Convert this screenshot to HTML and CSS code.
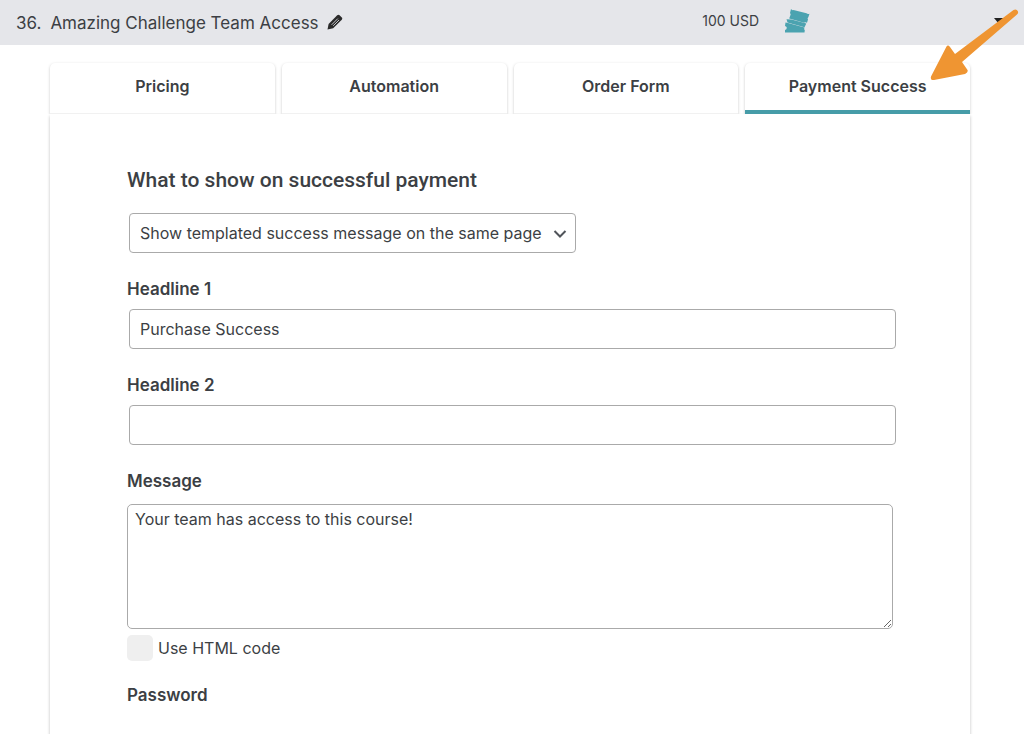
FILE: index.html
```html
<!DOCTYPE html>
<html lang="en">
<head>
    <meta charset="UTF-8">
    <meta name="viewport" content="width=device-width, initial-scale=1.0">
    <title>Amazing Challenge Team Access</title>
    <link rel="stylesheet" href="styles.css">
</head>
<body>
    <header class="plan-header">
        <h1 class="plan-title"><span>36.</span><span>Amazing Challenge Team Access</span></h1>
        <button type="button" class="icon-btn" aria-label="Edit name">
            <svg width="16" height="16" viewBox="0 0 16 16">
                <path d="M0.5 15.5 L1.6 10 L10.2 1.3 Q11.4 0.2 12.6 1.3 L14.8 3.5 Q15.8 4.6 14.8 5.8 L6.2 14.3 Z" fill="#2b2b2b"/>
                <path d="M4.6 10.8 L10.8 4.600 M6.2 11.8 L12 6" fill="none" stroke="#d4d5d9" stroke-width="0.9"/>
            </svg>
        </button>
        <span class="plan-price">100 USD</span>
        <svg class="ticket-icon" width="26" height="24" viewBox="0 0 26 24">
            <path d="M7 0 Q8 1.500 9.500 1 L22.500 4.300 Q23.500 5.300 25.500 4.800 L24.300 8.300 Q23 9.300 24 10.500 L23 13.700 Q21 12.700 20 13.800 L8 10.200 L5.200 9.500 L6.300 6.500 Q7.200 5 6 4 Z" fill="#4ba3b0"/>
            <path d="M2.500 10.300 L7.500 10.500 L20.500 14.100 L22.300 14.500 L20.500 18.200 L3.500 13.500 Z" fill="#4ba3b0"/>
            <path d="M1.500 13.500 L4 13.900 L20.500 18.500 Q19.500 20.500 20.800 21 L20.500 23.500 L1 23.500 L1 21 Q2.800 20.500 2.800 18.700 Q2.800 17.500 1 17 Z" fill="#4ba3b0"/>
        </svg>
        <button type="button" class="icon-btn plan-toggle" aria-label="Toggle plan">
            <svg width="10" height="6" viewBox="0 0 10 6"><path d="M0 0 H10 L5 6 Z" fill="#222"/></svg>
        </button>
        <svg class="pointer-arrow" width="96" height="76" viewBox="0 0 96 76">
            <path d="M89.5 6 Q92.5 4.5 94 7.5 Q94.5 9 93 10.5 L38 58 L43.5 66 Q44.5 68.5 41 70 L10 76 Q6 76.500 7 72.500 L22.5 42.500 Q24 40.500 26 43 L31 50 Z" fill="#ef9532"/>
        </svg>
    </header>

    <main class="plan">
        <nav class="tabs" role="tablist">
            <button type="button" class="tab" role="tab" aria-selected="false">Pricing</button>
            <button type="button" class="tab" role="tab" aria-selected="false">Automation</button>
            <button type="button" class="tab" role="tab" aria-selected="false">Order Form</button>
            <button type="button" class="tab active" role="tab" aria-selected="true">Payment Success</button>
        </nav>
        <form class="panel">
            <h2 class="panel-title"><label for="successAction">What to show on successful payment</label></h2>
            <div class="select-wrap">
                <select id="successAction" class="field">
                    <option>Show templated success message on the same page</option>
                </select>
                <svg class="chevron" width="14" height="10" viewBox="0 0 14 10"><path d="M1.500 2 L7 7.500 L12.500 2" fill="none" stroke="#50545a" stroke-width="2"/></svg>
            </div>

            <label class="label" for="headline1">Headline 1</label>
            <input type="text" id="headline1" class="field" value="Purchase Success">

            <label class="label" for="headline2">Headline 2</label>
            <input type="text" id="headline2" class="field">

            <label class="label" for="message">Message</label>
            <textarea id="message" class="message">Your team has access to this course!</textarea>

            <div class="check-row">
                <input type="checkbox" id="useHtml">
                <label for="useHtml">Use HTML code</label>
            </div>

            <p class="label">Password</p>
        </form>
    </main>
</body>
</html>
```

FILE: styles.css
```css
* {
    box-sizing: border-box;
}
body {
    margin: 0;
    min-height: 100vh;
    display: flex;
    flex-direction: column;
    font-family: Inter, "Liberation Sans", sans-serif;
    font-size: 16px;
    line-height: 20px;
    color: #3c3f44;
    background-color: #fff;
}
button,
input,
select,
textarea {
    font: inherit;
    color: inherit;
}
.plan-header {
    position: relative;
    z-index: 1;
    display: flex;
    align-items: center;
    height: 45px;
    padding: 0 20px 4px 16px;
    background-color: #e5e6ea;
}
.plan-title {
    display: flex;
    gap: 9px;
    margin: 4px 0 0;
    font-size: 17px;
    font-weight: 400;
}
.icon-btn {
    display: flex;
    margin: 2px 0 0 8px;
    padding: 0;
    border: none;
    background: none;
    cursor: pointer;
}
.plan-price {
    margin-left: auto;
    font-size: 14px;
}
.ticket-icon {
    margin-left: 25px;
}
.plan-toggle {
    margin: 0 0 0 184px;
}
/* annotation arrow over the active tab */
.pointer-arrow {
    position: absolute;
    top: 4px;
    right: 4px;
    pointer-events: none;
}
.plan {
    flex: 1;
    display: flex;
    flex-direction: column;
    margin: 18px 54px 0 50px;
}
.tabs {
    display: grid;
    grid-template-columns: repeat(4, 1fr);
    gap: 7px;
}
.tab {
    height: 51px;
    padding: 0 0 4px;
    border: none;
    border-bottom: 1px solid #f1f1f1;
    border-radius: 5px 5px 0 0;
    background-color: #fff;
    box-shadow: 0 1px 3px rgba(0, 0, 0, 0.22);
    clip-path: inset(-2px -3px 0 -3px);
    font-weight: 600;
    cursor: pointer;
}
.tab.active {
    padding: 0 0 1px;
    border-bottom: 4px solid #469ca8;
}
.panel {
    flex: 1;
    padding: 54px 75px 28px 77px;
    background-color: #fff;
    box-shadow: 0 2px 3px rgba(0, 0, 0, 0.25);
}
.panel-title {
    margin: 0 0 21px;
    font-family: Roboto, sans-serif;
    font-size: 21px;
    font-weight: 500;
    line-height: 24px;
}
.label {
    display: block;
    margin: 26px 0 10px;
    font-size: 17px;
    font-weight: 600;
}
.field {
    display: block;
    width: calc(100% - 1px);
    height: 40px;
    margin-left: 2px;
    padding: 0 10px;
    border: 1px solid #aaa;
    border-radius: 4px;
    background-color: #fff;
}
.select-wrap {
    position: relative;
    width: fit-content;
}
select.field {
    width: auto;
    padding-right: 33px;
    appearance: none;
}
.chevron {
    position: absolute;
    top: 16px;
    right: 9px;
    pointer-events: none;
}
.message {
    display: block;
    width: calc(100% - 2px);
    height: 125px;
    margin-top: 13px;
    padding: 4px 7px;
    border: 1px solid #aaa;
    border-radius: 5px;
    resize: vertical;
}
.check-row {
    display: flex;
    align-items: center;
    gap: 5px;
    margin: 6px 0 24px;
    line-height: 24px;
}
.check-row input {
    appearance: none;
    width: 26px;
    height: 26px;
    margin: 0;
    border-radius: 5px;
    background-color: #efefef;
}
.check-row input:checked {
    background-color: #469ca8;
}
.check-row + .label {
    margin-top: 0;
}
```
